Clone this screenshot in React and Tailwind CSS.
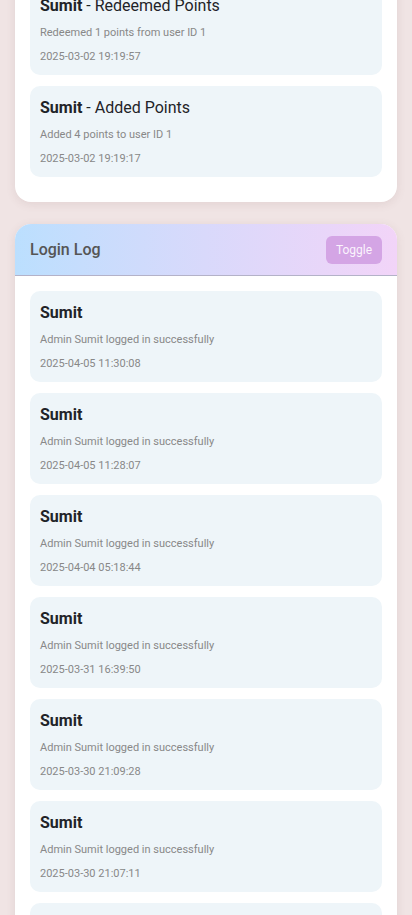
const pointLogs = [
    { name: "Sumit", action: "Redeemed Points", detail: "Redeemed 1 points from user ID 1", date: "2025-03-02 19:19:57" },
    { name: "Sumit", action: "Added Points", detail: "Added 4 points to user ID 1", date: "2025-03-02 19:19:17" },
];

const loginLogs = [
    "2025-04-05 11:30:08",
    "2025-04-05 11:28:07",
    "2025-04-04 05:18:44",
    "2025-03-31 16:39:50",
    "2025-03-30 21:09:28",
    "2025-03-30 21:07:11",
    "2025-03-29 18:42:03",
];

function LogItem({ title, action, detail, date }) {
    return (
        <div className="bg-[#eef5f9] rounded-[10px] px-[10px] pt-[10px] pb-[11px] mb-[11px]">
            <p className="text-[16px] leading-6 text-[#1f2328]">
                <span className="font-bold">{title}</span>
                {action && <span> - {action}</span>}
            </p>
            <p className="mt-[8px] text-[11px] leading-[14px] text-[#888]">{detail}</p>
            <p className="mt-[10px] text-[11px] leading-[14px] text-[#888]">{date}</p>
        </div>
    );
}

function LogCard({ title, children, className = "" }) {
    return (
        <div className={"bg-white rounded-2xl shadow-[0_2px_10px_rgba(120,80,80,0.12)] overflow-hidden " + className}>
            <div className="h-[52px] flex items-center justify-between px-[15px] bg-gradient-to-r from-[#bbdffe] via-[#d9d9fb] to-[#f2d4f8] border-b border-[#b4b2c8]">
                <h2 className="text-[16px] font-medium text-[#555]">{title}</h2>
                <button className="h-7 w-14 rounded-md bg-[#d4a5e5] text-[#fbf4fd] text-[12px]">Toggle</button>
            </div>
            <div className="px-[15px] pt-[15px] pb-[14px]">{children}</div>
        </div>
    );
}

export default function App() {
    return (
        <div className="min-h-screen bg-[#f0e4e4] px-[15px] overflow-hidden" style={{ fontFamily: "Roboto, 'Liberation Sans', sans-serif" }}>
            {/* page is scrolled: the points card header is above the viewport */}
            <LogCard title="Points Log" className="mt-[-83px]">
                {pointLogs.map((log, i) => (
                    <LogItem key={i} title={log.name} action={log.action} detail={log.detail} date={log.date} />
                ))}
            </LogCard>
            <LogCard title="Login Log" className="mt-[22px]">
                {loginLogs.map((date, i) => (
                    <LogItem key={i} title="Sumit" detail="Admin Sumit logged in successfully" date={date} />
                ))}
            </LogCard>
        </div>
    );
}
